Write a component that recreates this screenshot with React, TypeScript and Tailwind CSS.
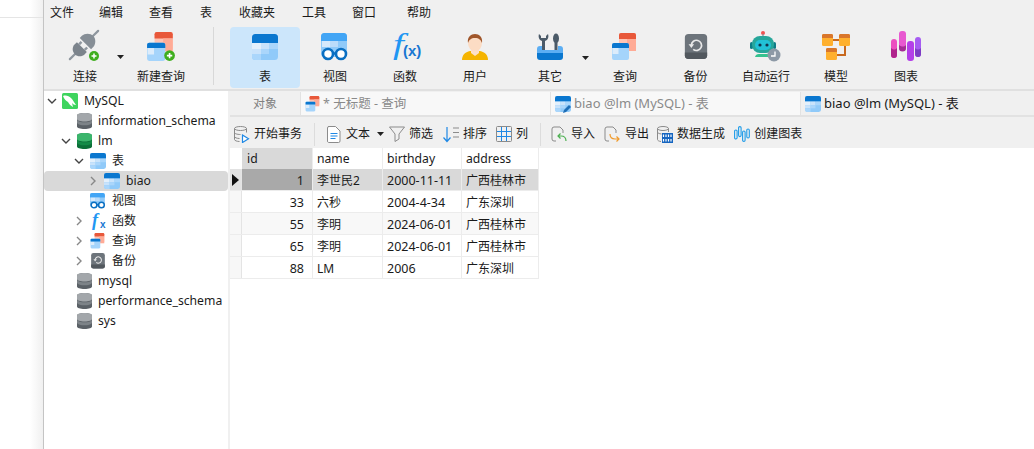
const font = "[font-family:'Noto_Sans','Noto_Sans_CJK_SC',sans-serif]";

type IconProps = { size?: number };

function TableIcon({ size = 26 }: IconProps) {
  return (
    <svg width={size} height={size} viewBox="0 0 26 26" className="shrink-0">
      <clipPath id="tbl"><rect width="26" height="26" rx="3.5" /></clipPath>
      <g clipPath="url(#tbl)">
        <rect width="26" height="26" fill="#90caf9" />
        <rect width="26" height="9" fill="#0a77cf" />
        <rect y="9" width="9" height="6" fill="#e3f0fc" />
        <rect x="9" y="9" width="8" height="6" fill="#c9e3fb" />
        <rect x="17" y="9" width="9" height="6" fill="#aad6fb" />
        <rect y="15" width="9" height="5" fill="#c9e3fb" />
        <rect x="9" y="15" width="8" height="5" fill="#aad6fb" />
        <rect y="20" width="9" height="6" fill="#aad6fb" />
      </g>
    </svg>
  );
}

function ViewIcon({ size = 28 }: IconProps) {
  return (
    <svg width={size} height={size} viewBox="0 0 28 28" className="shrink-0">
      <rect x="0" y="0" width="26" height="24" rx="3.5" fill="#90caf9" />
      <path d="M0 8V3.5A3.5 3.5 0 0 1 3.5 0h19A3.5 3.5 0 0 1 26 3.5V8z" fill="#42a5f5" />
      <rect x="1" y="8" width="8" height="6" fill="#d6e9fb" />
      <rect x="9" y="8" width="8" height="6" fill="#bbdcfa" />
      <circle cx="7" cy="21" r="5" fill="#fff" stroke="#0a6fc2" strokeWidth="2.6" />
      <circle cx="20" cy="21" r="5" fill="#fff" stroke="#0a6fc2" strokeWidth="2.6" />
      <path d="M11 20.5h5" stroke="#0a6fc2" strokeWidth="2.4" />
    </svg>
  );
}

function QueryIcon({ size = 26, badge = false }: IconProps & { badge?: boolean }) {
  return (
    <svg width={size} height={size} viewBox="0 0 26 28" className="shrink-0">
      <rect x="7" y="0" width="17" height="17" rx="2" fill="#ffc4b4" />
      <path d="M7 6V2a2 2 0 0 1 2-2h13a2 2 0 0 1 2 2v4z" fill="#e8583a" />
      <rect x="15" y="6" width="9" height="12" fill="#ffab96" />
      <rect x="0" y="10" width="17" height="17" rx="2" fill="#a5d4fb" />
      <rect x="0.5" y="15" width="6" height="6" fill="#dcecfb" />
      <path d="M0 15v-3a2 2 0 0 1 2-2h13a2 2 0 0 1 2 2v3z" fill="#0a77cf" />
      {badge && <circle cx="21" cy="22" r="5" fill="#3fae1e" />}
      {badge && <path d="M21 19.500v5M18.500 22h5" stroke="#fff" strokeWidth="1.5" />}
    </svg>
  );
}

function PlugIcon() {
  return (
    <svg width="32" height="32" viewBox="0 0 32 32" className="shrink-0 overflow-visible">
      <g transform="rotate(-45 15 14)">
        <path d="M-5 14h7M28 14h7" stroke="#8f979f" strokeWidth="2.2" strokeLinecap="round" />
        <path d="M2 14c0-4 3-7 7-7h3v14H9c-4 0-7-3-7-7z" fill="#7c848c" />
        <path d="M12 10h3.500M12 18h3.500" stroke="#8f979f" strokeWidth="2.4" />
        <path d="M17 6h3c4 0 8 4 8 8s-4 8-8 8h-3z" fill="#868e96" />
      </g>
      <circle cx="25" cy="25" r="5" fill="#3fae1e" />
      <path d="M25 22.500v5M22.500 25h5" stroke="#fff" strokeWidth="1.5" />
    </svg>
  );
}

function FnIcon({ size = 32, small = false }: IconProps & { small?: boolean }) {
  return (
    <svg width={size} height={size} viewBox="0 0 32 32" className="shrink-0 overflow-visible">
      <text
        x={small ? 4 : 3}
        y={small ? 25 : 23}
        fontSize={small ? 36 : 29}
        fontWeight={small ? 700 : 400}
        fontStyle="italic"
        fontFamily="'Liberation Serif',serif"
        fill="#2196f3"
        transform={small ? undefined : "scale(1.35 1)"}
      >
        f
      </text>
      <text x={small ? 20 : 14} y={small ? 30 : 25} fontSize={small ? 20 : 15} fontWeight="600" fontFamily="'Liberation Sans',sans-serif" fill="#1976d2">
        {small ? "x" : "(x)"}
      </text>
    </svg>
  );
}

function UserIcon() {
  return (
    <svg width="28" height="28" viewBox="0 0 28 28" className="shrink-0">
      <path d="M1 27c0-5 3-8 8-9h10c5 1 8 4 8 9z" fill="#f5b400" />
      <path d="M10 15h8v5l-4 3-4-3z" fill="#fde0c8" />
      <ellipse cx="14" cy="10" rx="7" ry="8.5" fill="#fcdcc4" />
      <path d="M7 10C6 4 10 1 14 1s8 3 7 9c-1-3-3-5-7-5s-6 2-7 5z" fill="#a0562a" />
    </svg>
  );
}

function ToolsIcon() {
  return (
    <svg width="28" height="28" viewBox="0 0 28 28" className="shrink-0">
      <path d="M3 1C2 4 3 7 6 8v10h3V8c3-1 4-4 3-7l-2 2v2H5V3z" fill="#4b5a68" />
      <path d="M18.500 18V9.500h3V18z" fill="#4b5a68" />
      <ellipse cx="20" cy="5.500" rx="3" ry="5" fill="#4b5a68" />
      <path d="M1 16a3 3 0 0 1 3-3h2v4h16v-4h2a3 3 0 0 1 3 3v4H1z" fill="#5caef3" />
      <path d="M1 20h26v4a3 3 0 0 1-3 3H4a3 3 0 0 1-3-3z" fill="#0a77cf" />
    </svg>
  );
}

function BackupIcon({ size = 28 }: IconProps) {
  return (
    <svg width={size} height={size} viewBox="0 0 28 28" className="shrink-0">
      <rect x="2" y="0" width="24" height="27" rx="4" fill="#6d747b" />
      <path d="M2 20h24v3a4 4 0 0 1-4 4H6a4 4 0 0 1-4-4z" fill="#52585e" />
      <path d="M9 12a5.5 5.5 0 1 1 2 4.5" fill="none" stroke="#e8e8e8" strokeWidth="1.8" />
      <path d="M6 11h6l-3 4z" fill="#e8e8e8" />
    </svg>
  );
}

function RobotIcon() {
  return (
    <svg width="32" height="32" viewBox="0 0 32 32" className="shrink-0">
      <circle cx="13" cy="2" r="2" fill="#ef5350" />
      <path d="M13 3v3" stroke="#8a939c" strokeWidth="1.4" />
      <rect x="0" y="11" width="3" height="7" rx="1.5" fill="#0e7c86" />
      <rect x="23" y="11" width="3" height="7" rx="1.5" fill="#0e7c86" />
      <rect x="2" y="5" width="22" height="17" rx="8" fill="#26a69a" />
      <rect x="5" y="9" width="16" height="10" rx="5" fill="#22c1d6" />
      <circle cx="10" cy="14" r="1.6" fill="#12344d" />
      <circle cx="17" cy="14" r="1.6" fill="#12344d" />
      <path d="M5 26a4 4 0 0 1 4-3h8a4 4 0 0 1 4 3z" fill="#35c28f" />
      <circle cx="24" cy="24" r="6.5" fill="#8d99a6" />
      <path d="M25 20.5V25h-4" fill="none" stroke="#fff" strokeWidth="1.3" />
    </svg>
  );
}

function ModelIcon() {
  const box = (x: number, y: number) => (
    <g>
      <rect x={x} y={y} width="11" height="12" rx="1.5" fill="#ffb02e" />
      <path d={`M${x} ${y + 4}v-2.5a1.5 1.5 0 0 1 1.5-1.5h8a1.5 1.5 0 0 1 1.5 1.5v2.500z`} fill="#d9762b" />
    </g>
  );
  return (
    <svg width="28" height="28" viewBox="0 0 28 28" className="shrink-0">
      <path d="M11 7h6M23 13v9H12" fill="none" stroke="#c8691f" strokeWidth="2" />
      {box(0, 1)}
      {box(17, 1)}
      {box(4, 15)}
    </svg>
  );
}

function ChartIcon() {
  return (
    <svg width="32" height="32" viewBox="0 0 32 32" className="shrink-0">
      <rect x="1" y="8" width="6" height="19" rx="3" fill="#ec4fc0" />
      <path d="M1 17c3 2 4 2 6 0v7a3 3 0 0 1-6 0z" fill="#b0248c" />
      <rect x="9" y="0" width="7" height="20" rx="3" fill="#e858d0" />
      <path d="M9 14c3 2 5 2 7 0v3a3.500 3.500 0 0 1-7 0z" fill="#a52c95" />
      <rect x="17" y="10" width="7" height="20" rx="3" fill="#b43fe8" />
      <rect x="25" y="6" width="6" height="20" rx="3" fill="#a65cf2" />
      <path d="M25 17c2 2 4 2 6 0v6a3 3 0 0 1-6 0z" fill="#7d3cc4" />
    </svg>
  );
}

function DbIcon({ top, mid, low }: { top: string; mid: string; low: string }) {
  return (
    <svg width="15" height="16" viewBox="0 0 15 16" className="shrink-0">
      <path d="M0 2.500C0 1 3 0 7.500 0S15 1 15 2.500v11C15 15 12 16 7.500 16S0 15 0 13.500z" fill={low} />
      <path d="M0 2.500C0 1 3 0 7.500 0S15 1 15 2.500V6c0 1.500-3 2.500-7.500 2.500S0 7.500 0 6z" fill={top} />
      <path d="M0 7c1 1.500 4 2.300 7.500 2.300S14 8.500 15 7v3c-1 1.500-4 2.300-7.500 2.300S1 11.500 0 10z" fill={mid} />
    </svg>
  );
}

function GrayDb() {
  return <DbIcon top="#a3a7ab" mid="#7d8388" low="#5b6167" />;
}

function MysqlIcon() {
  return (
    <svg width="16" height="16" viewBox="0 0 16 16" className="shrink-0">
      <rect width="16" height="16" rx="1.500" fill="#3ed45e" />
      <path d="M1 3c3-1 6 0 8 2 2 2 3 4 5 7-2 0-3-1-4-2l1 4c-2-1-4-3-5-5C4 8 2 6 1 3z" fill="#fff" />
    </svg>
  );
}

function Chevron({ open, dark }: { open?: boolean; dark?: boolean }) {
  return (
    <svg width="10" height="10" viewBox="0 0 10 10" className="shrink-0">
      <path
        d={open ? "M1 3l4 4 4-4" : "M3 1l4 4-4 4"}
        fill="none"
        stroke={dark ? "#444" : "#888"}
        strokeWidth="1.400"
      />
    </svg>
  );
}

function Caret() {
  return (
    <svg width="7" height="4" viewBox="0 0 7 4" className="shrink-0">
      <path d="M0 0h7L3.500 4z" fill="#222" />
    </svg>
  );
}

function ToolButton({ label, icon, width = "w-[70px]", active }: { label: string; icon: React.ReactNode; width?: string; active?: boolean }) {
  return (
    <div className={`${width} h-[61px] flex flex-col items-center shrink-0 rounded-sm ${active ? "bg-[#cce6fb]" : ""}`}>
      <div className="h-[39px] flex items-center justify-center">{icon}</div>
      <span className="text-[12px] leading-[20px] text-[#1a1a1a] mt-[1px]">{label}</span>
    </div>
  );
}

function DocIcon() {
  return (
    <svg width="14" height="17" viewBox="0 0 14 17" className="shrink-0">
      <path d="M1.500.5h7l4.500 4.500v10a1.500 1.500 0 0 1-1.500 1.500h-10A1.500 1.500 0 0 1 .5 15V2A1.500 1.500 0 0 1 2 .5z" fill="#fff" stroke="#8b8b8b" />
      <path d="M3.500 7.500h7M3.500 10h7M3.500 12.500h5" stroke="#1e88e5" strokeWidth="1.100" />
    </svg>
  );
}

function TxIcon() {
  return (
    <svg width="16" height="17" viewBox="0 0 16 17" className="shrink-0">
      <ellipse cx="6.500" cy="2.500" rx="6" ry="2" fill="none" stroke="#8b8b8b" />
      <path d="M.5 2.500v11c0 1.100 2.500 2 5 2M12.500 2.500v4M.5 6.500c0 1.100 2.500 2 6 2M.5 10.500c0 1.100 2.500 2 5 2" fill="none" stroke="#8b8b8b" />
      <path d="M8.500 9l6 3.800-6 3.700z" fill="#fff" stroke="#1e88e5" strokeWidth="1.200" />
    </svg>
  );
}

function FunnelIcon() {
  return (
    <svg width="16" height="16" viewBox="0 0 16 16" className="shrink-0">
      <path d="M.5 1h15L10 8v5l-4 2.500V8z" fill="none" stroke="#8b8b8b" />
    </svg>
  );
}

function SortIcon() {
  return (
    <svg width="16" height="17" viewBox="0 0 16 17" className="shrink-0">
      <path d="M4 1v14M.5 11.500L4 15.500l3.500-4" fill="none" stroke="#1e88e5" strokeWidth="1.200" />
      <path d="M10 2h6M10 6.500h6M10 11h6" stroke="#8b8b8b" />
    </svg>
  );
}

function ColsIcon() {
  return (
    <svg width="16" height="16" viewBox="0 0 16 16" className="shrink-0">
      <rect x=".5" y=".5" width="15" height="15" rx="1" fill="none" stroke="#8b8b8b" />
      <path d="M5.500 1v14M10.500 1v14M1 5.500h14M1 10.500h14" stroke="#1e88e5" />
    </svg>
  );
}

function ImportIcon({ out }: { out?: boolean }) {
  return (
    <svg width="16" height="16" viewBox="0 0 16 16" className="shrink-0">
      <path d="M5 15H3a2 2 0 0 1-2-2V3a2 2 0 0 1 2-2h6l3 3v3" fill="none" stroke="#8b8b8b" />
      {out ? (
        <path d="M6 8c0 3 2 5 5 5h4M12.500 10.500L15 13l-2.500 2.500" fill="none" stroke="#f09a2a" strokeWidth="1.200" />
      ) : (
        <path d="M15 15c0-3-2-5-5-5H7M9.500 7.500L7 10l2.500 2.500" fill="none" stroke="#4caf50" strokeWidth="1.200" />
      )}
    </svg>
  );
}

function GenIcon() {
  return (
    <svg width="16" height="17" viewBox="0 0 16 17" className="shrink-0">
      <ellipse cx="6" cy="2.500" rx="5.500" ry="2" fill="none" stroke="#8b8b8b" />
      <path d="M.5 2.500v11c0 1 1.500 1.800 3.500 2M11.500 2.500V6M.5 6c0 1 1.500 1.800 4 2" fill="none" stroke="#8b8b8b" />
      <rect x="5" y="7" width="11" height="10" fill="#1565c0" />
      <path d="M6.500 8.500v2.500M9 8.500v2.500M11.500 8.500v2.500M14 8.500v2.500M6.500 13v2.500M9 13v2.500M11.500 13v2.500M14 13v2.500" stroke="#fff" strokeWidth="1.200" />
    </svg>
  );
}

function BarsIcon() {
  return (
    <svg width="16" height="16" viewBox="0 0 16 16" className="shrink-0">
      <g fill="none" stroke="#1e9be8" strokeWidth="1.100">
        <rect x=".6" y="4" width="2.500" height="9" rx="1.250" />
        <rect x="4.600" y=".6" width="2.500" height="10" rx="1.250" />
        <rect x="8.600" y="5" width="2.500" height="10.400" rx="1.250" />
        <rect x="12.800" y="3" width="2.500" height="9" rx="1.250" />
      </g>
    </svg>
  );
}

function MiniTool({ icon, label, className = "" }: { icon: React.ReactNode; label: string; className?: string }) {
  return (
    <div className={`flex items-center gap-1 shrink-0 ${className}`}>
      {icon}
      <span className="text-[12px] text-[#1a1a1a]">{label}</span>
    </div>
  );
}

function TreeRow({ indent, chevron, icon, label, selected, cjk }: { indent: string; chevron?: "open" | "closed"; icon: React.ReactNode; label: string; selected?: boolean; cjk?: boolean }) {
  return (
    <div className={`h-5 flex items-center ${indent} ${selected ? "bg-[#d9d9d9] rounded-sm" : ""}`}>
      <span className="w-[10px] flex justify-center shrink-0">
        {chevron && <Chevron open={chevron === "open"} dark={chevron === "open"} />}
      </span>
      {icon}
      <span className={`${cjk ? "text-[12px]" : "text-[12.200px]"} text-[#1a1a1a] whitespace-nowrap`}>{label}</span>
    </div>
  );
}

const rows = [
  ["1", "李世民2", "2000-11-11", "广西桂林市"],
  ["33", "六秒", "2004-4-34", "广东深圳"],
  ["55", "李明", "2024-06-01", "广西桂林市"],
  ["65", "李明", "2024-06-01", "广西桂林市"],
  ["88", "LM", "2006", "广东深圳"],
];

function DataTable() {
  return (
    <div className="w-[309px] text-[12px] text-[#1a1a1a]">
      <div className="flex h-[21px] items-stretch bg-white text-[12.200px]">
        <div className="w-[12px] bg-white" />
        <div className="w-[70px] bg-[#d9d9d9] pl-[5px] leading-[21px]">id</div>
        <div className="w-[70px] pl-[4px] leading-[21px] border-l border-[#ececec]">name</div>
        <div className="w-[79px] pl-[4px] leading-[21px] border-l border-[#ececec]">birthday</div>
        <div className="w-[78px] pl-[4px] leading-[21px] border-l border-[#ececec] border-r">address</div>
      </div>
      {rows.map((r, i) => {
        const sel = i === 0;
        const bg = sel ? "bg-[#d9d9d9]" : i === 2 ? "bg-[#f8f8f8]" : "bg-white";
        return (
          <div key={i} className={`flex h-[22px] items-stretch border-b border-[#ececec] ${bg}`}>
            <div className={`w-[12px] border-r border-[#e4e4e4] flex items-center justify-center ${sel ? "bg-[#e2e2e2]" : "bg-[#f7f7f7]"}`}>
              {sel && (
                <svg width="7" height="12" viewBox="0 0 7 12">
                  <path d="M0 0l7 6-7 6z" fill="#111" />
                </svg>
              )}
            </div>
            <div className={`w-[70px] text-right pr-[8px] leading-[23px] text-[12.500px] ${sel ? "bg-[#a9a9a9]" : ""}`}>{r[0]}</div>
            <div className="w-[70px] pl-[4px] leading-[23px] border-l border-[#ececec]">{r[1]}</div>
            <div className="w-[79px] pl-[4px] leading-[23px] text-[12.500px] border-l border-[#ececec]">{r[2]}</div>
            <div className="w-[78px] pl-[4px] leading-[23px] border-l border-r border-[#ececec]">{r[3]}</div>
          </div>
        );
      })}
    </div>
  );
}

export default function App() {
  return (
    <div className={`${font} flex w-[1034px] h-[449px] overflow-hidden bg-white`}>
      <div className="w-[43px] shrink-0 bg-gradient-to-r from-white from-70% to-[#f0f0f0]">
        <div className="h-[18px] border-b border-[#e5e5e5]" />
      </div>

      <div className="flex-1 flex flex-col border-l border-[#c4c4c4] min-w-0">
        <div className="h-[26px] bg-[#f0f0f0] relative flex items-center text-[12px] text-[#1a1a1a] pl-[6px] shrink-0">
          <span className="w-[49px]">文件</span>
          <span className="w-[50px]">编辑</span>
          <span className="w-[51px]">查看</span>
          <span className="w-[39px]">表</span>
          <span className="w-[63px]">收藏夹</span>
          <span className="w-[50px]">工具</span>
          <span className="w-[55px]">窗口</span>
          <span>帮助</span>
        </div>

        <div className="h-[65px] bg-[#f0f0f0] border-b-2 border-[#e0e0e0] flex items-start pt-[1px] pl-[6px] shrink-0">
          <div className="flex">
            <ToolButton label="连接" icon={<PlugIcon />} />
            <div className="w-[6px] pt-[28px] -ml-[3px] mr-[3px]"><Caret /></div>
            <ToolButton label="新建查询" icon={<QueryIcon size={30} badge />} />
          </div>
          <div className="w-px h-[58px] bg-[#d8d8d8] ml-[17px] mr-[16px]" />
          <ToolButton label="表" icon={<TableIcon />} active />
          <ToolButton label="视图" icon={<ViewIcon />} />
          <ToolButton label="函数" icon={<FnIcon />} />
          <ToolButton label="用户" icon={<UserIcon />} />
          <ToolButton label="其它" icon={<ToolsIcon />} width="w-[80px]" />
          <div className="w-0 pt-[29px] -translate-x-[8px]"><Caret /></div>
          <ToolButton label="查询" icon={<QueryIcon size={28} />} />
          <ToolButton label="备份" icon={<BackupIcon size={26} />} width="w-[71px]" />
          <ToolButton label="自动运行" icon={<RobotIcon />} />
          <ToolButton label="模型" icon={<ModelIcon />} />
          <ToolButton label="图表" icon={<ChartIcon />} />
        </div>

        <div className="flex flex-1 min-h-0">
          <div className="w-[184px] shrink-0 bg-white">
            <TreeRow indent="pl-[3px]" chevron="open" icon={<span className="ml-[5px] mr-[6px] flex"><MysqlIcon /></span>} label="MySQL" />
            <TreeRow indent="pl-[21px]" icon={<span className="mr-[6px] ml-[2px] flex"><GrayDb /></span>} label="information_schema" />
            <TreeRow indent="pl-[17px]" chevron="open" icon={<span className="ml-[6px] mr-[6px] flex"><DbIcon top="#3bb56c" mid="#138a47" low="#0b6f38" /></span>} label="lm" />
            <TreeRow indent="pl-[30px]" chevron="open" icon={<span className="ml-[6px] mr-[6px] flex"><TableIcon size={16} /></span>} label="表" cjk />
            <TreeRow indent="pl-[44px]" chevron="closed" icon={<span className="ml-[6px] mr-[6px] flex"><TableIcon size={16} /></span>} label="biao" selected />
            <TreeRow indent="pl-[36px]" icon={<span className="mr-[6px] flex"><ViewIcon size={16} /></span>} label="视图" cjk />
            <TreeRow indent="pl-[30px]" chevron="closed" icon={<span className="ml-[6px] mr-[6px] flex"><FnIcon size={16} small /></span>} label="函数" cjk />
            <TreeRow indent="pl-[30px]" chevron="closed" icon={<span className="ml-[6px] mr-[6px] flex"><QueryIcon size={16} /></span>} label="查询" cjk />
            <TreeRow indent="pl-[30px]" chevron="closed" icon={<span className="ml-[6px] mr-[6px] flex"><BackupIcon size={16} /></span>} label="备份" cjk />
            <TreeRow indent="pl-[21px]" icon={<span className="mr-[6px] ml-[2px] flex"><GrayDb /></span>} label="mysql" />
            <TreeRow indent="pl-[21px]" icon={<span className="mr-[6px] ml-[2px] flex"><GrayDb /></span>} label="performance_schema" />
            <TreeRow indent="pl-[21px]" icon={<span className="mr-[6px] ml-[2px] flex"><GrayDb /></span>} label="sys" />
          </div>
          <div className="w-[2px] bg-[#f0f0f0] shrink-0" />

          <div className="flex-1 flex flex-col min-w-0">
            <div className="h-[26px] bg-[#f0f0f0] border-b-2 border-[#e2e2e2] flex items-stretch text-[13px] pt-[1px] shrink-0">
              <div className="w-[71px] flex items-center justify-center text-[12px] text-[#808080] border-r border-[#e2e2e2]">对象</div>
              <div className="w-[250px] bg-[#f8f8f8] border-r border-[#e2e2e2] flex items-center pl-[4px] gap-[2px] text-[12.500px] text-[#8a8a8a]">
                <QueryIcon size={16} />
                <span className="pt-[1px]">* 无标题 - 查询</span>
              </div>
              <div className="w-[250px] bg-[#f8f8f8] border-r border-[#e2e2e2] flex items-center pl-[4px] gap-[3px] text-[#8a8a8a]">
                <span className="relative flex">
                  <TableIcon size={16} />
                  <svg width="9" height="9" viewBox="0 0 9 9" className="absolute -right-[1px] -bottom-[1px]">
                    <path d="M0 9l1-3 5-5 2 2-5 5z" fill="#1e6fb8" />
                  </svg>
                </span>
                <span>biao @lm (MySQL) - 表</span>
              </div>
              <div className="flex items-center pl-[4px] gap-[3px] text-[#1a1a1a]">
                <TableIcon size={16} />
                <span>biao @lm (MySQL) - 表</span>
              </div>
            </div>

            <div className="h-[31px] bg-[#f0f0f0] flex items-center pl-[4px] pt-[3px] shrink-0">
              <MiniTool icon={<TxIcon />} label="开始事务" />
              <div className="w-px h-[23px] bg-[#dcdcdc] ml-[12px] mr-[12px]" />
              <MiniTool icon={<DocIcon />} label="文本" className="gap-[5px]" />
              <span className="ml-[7px]"><Caret /></span>
              <MiniTool icon={<FunnelIcon />} label="筛选" className="ml-[5px]" />
              <MiniTool icon={<SortIcon />} label="排序" className="ml-[10px]" />
              <MiniTool icon={<ColsIcon />} label="列" className="ml-[9px]" />
              <div className="w-px h-[23px] bg-[#dcdcdc] ml-[12px] mr-[10px]" />
              <MiniTool icon={<ImportIcon />} label="导入" />
              <MiniTool icon={<ImportIcon out />} label="导出" className="ml-[9px] gap-[5px]" />
              <MiniTool icon={<GenIcon />} label="数据生成" className="ml-[8px]" />
              <MiniTool icon={<BarsIcon />} label="创建图表" className="ml-[9px]" />
            </div>

            <DataTable />
          </div>
        </div>
      </div>
    </div>
  );
}
